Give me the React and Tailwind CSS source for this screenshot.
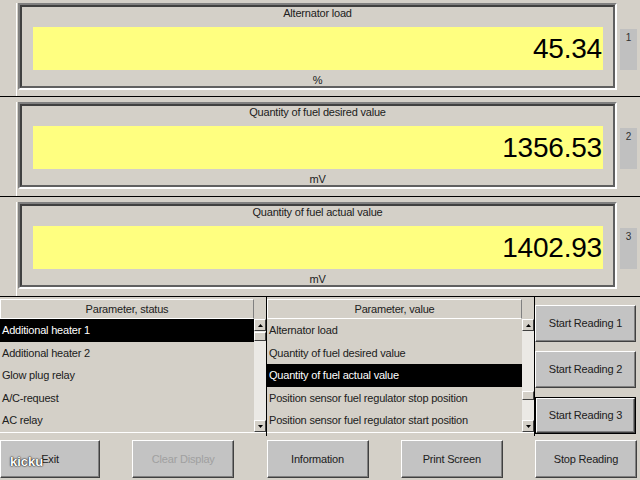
import React from "react";

const panels = [
  { title: "Alternator load", value: "45.34", unit: "%", tab: "1" },
  { title: "Quantity of fuel desired value", value: "1356.53", unit: "mV", tab: "2" },
  { title: "Quantity of fuel actual value", value: "1402.93", unit: "mV", tab: "3" },
];

const statusRows = [
  "Additional heater 1",
  "Additional heater 2",
  "Glow plug relay",
  "A/C-request",
  "AC relay",
];

const valueRows = [
  "Alternator load",
  "Quantity of fuel desired value",
  "Quantity of fuel actual value",
  "Position sensor fuel regulator stop position",
  "Position sensor fuel regulator start position",
];

function ReadingPanel({ panel, first }) {
  return (
    <div
      className={
        first
          ? "flex h-[96px] pt-[3px]"
          : "flex h-[100px] border-t border-black pt-[5px]"
      }
    >
      <div className="w-[16px]" />
      <div className="w-[2px] border-l border-white" />
      {/* sunken frame */}
      <div className="w-[599px] h-[87px] border-2 border-t-[#808080] border-l-[#808080] border-r-white border-b-white">
        <div className="h-full flex flex-col border-2 border-t-[#404040] border-l-[#404040] border-r-[#606060] border-b-[#606060]">
          <div className="h-[12px] leading-[12px] text-center text-[#202020]">
            {panel.title}
          </div>
          <div className="mt-[8px] ml-[11px] mr-[10px] h-[43px] bg-[#ffff80] text-right pr-px text-[28px] leading-[43px] text-black">
            {panel.value}
          </div>
          <div className="mt-[4px] h-[12px] leading-[12px] text-center text-[#202020]">
            {panel.unit}
          </div>
        </div>
      </div>
      <div className="ml-[3px] mt-[26px] w-[17px] h-[41px] bg-[#c0c0c0] text-center text-[10px] leading-[14px] text-[#303030] pt-[2px]">
        {panel.tab}
      </div>
    </div>
  );
}

function ScrollArrow({ up }) {
  return (
    <div className="w-[12px] h-[12px] bg-[#d4d0c8] border border-t-white border-l-white border-r-[#404040] border-b-[#404040] flex items-center justify-center">
      <svg width="5" height="3" viewBox="0 0 5 3">
        {up ? (
          <polygon points="2.5,0 5,3 0,3" fill="#000" />
        ) : (
          <polygon points="0,0 5,0 2.5,3" fill="#000" />
        )}
      </svg>
    </div>
  );
}

function ScrollBar({ thumbTop }) {
  return (
    <div className="w-[12px] h-[113px] flex flex-col bg-[#ebe9e5]">
      <ScrollArrow up />
      <div className="flex-1 relative">
        <div
          className="absolute left-0 w-[12px] h-[9px] bg-[#d4d0c8] border border-t-white border-l-white border-r-[#404040] border-b-[#404040]"
          style={{ top: thumbTop }}
        />
      </div>
      <ScrollArrow />
    </div>
  );
}

function ListBox({ header, rows, selected, thumbTop, width }) {
  return (
    <div className={width + " flex flex-col border-r border-black"}>
      <div className="flex mt-[2px]">
        <div className="flex-1 h-[20px] leading-[18px] text-center bg-[#d4d0c8] border border-white border-r-[#808080] text-[#202020]">
          {header}
        </div>
        <div className="w-[12px]" />
      </div>
      <div className="flex border-b border-white">
        <div className="flex-1 flex flex-col">
          {rows.map((row, i) => (
            <div
              key={i}
              className={
                i === selected
                  ? "h-[22.5px] leading-[22px] pl-[2px] bg-black text-white whitespace-nowrap"
                  : "h-[22.5px] leading-[22px] pl-[2px] text-[#202020] whitespace-nowrap"
              }
            >
              {row}
            </div>
          ))}
        </div>
        <ScrollBar thumbTop={thumbTop} />
      </div>
    </div>
  );
}

function WinButton({ label, className, disabled, focused }) {
  return (
    <div className={(focused ? "border border-black " : "") + className}>
      <div className="w-full h-full flex items-center justify-center bg-[#c3c3c3] border border-t-white border-l-white border-r-[#404040] border-b-[#404040] shadow-[inset_-1px_-1px_0_#808080]">
        <span className={disabled ? "text-[#a0a0a0]" : "text-[#202020]"}>
          {label}
        </span>
      </div>
    </div>
  );
}

export default function App() {
  return (
    <div className="relative w-[640px] h-[480px] overflow-hidden bg-[#d4d0c8] font-['Liberation_Sans',Arial,sans-serif] text-[11px] tracking-[-0.2px]">
      {panels.map((panel, i) => (
        <ReadingPanel key={i} panel={panel} first={i === 0} />
      ))}

      {/* lists and start buttons */}
      <div className="flex h-[140px] border-t border-black">
        <ListBox
          header="Parameter, status"
          rows={statusRows}
          selected={0}
          thumbTop={1}
          width="w-[267px]"
        />
        <ListBox
          header="Parameter, value"
          rows={valueRows}
          selected={2}
          thumbTop={60}
          width="w-[268px]"
        />
        <div className="flex-1 flex flex-col gap-[9px] pt-[8px]">
          <WinButton label="Start Reading 1" className="w-[101px] h-[37px]" />
          <WinButton label="Start Reading 2" className="w-[101px] h-[37px]" />
          <WinButton label="Start Reading 3" className="w-[101px] h-[37px]" focused />
        </div>
      </div>

      {/* bottom buttons */}
      <div className="flex justify-between w-[637px] pt-[4px]">
        <WinButton label="Exit" className="w-[100px] h-[38px]" />
        <WinButton label="Clear Display" className="w-[102px] h-[38px]" disabled />
        <WinButton label="Information" className="w-[102px] h-[38px]" />
        <WinButton label="Print Screen" className="w-[102px] h-[38px]" />
        <WinButton label="Stop Reading" className="w-[102px] h-[38px]" />
      </div>

      <div className="absolute left-[10px] top-[452px] text-[13px] font-bold text-white tracking-normal [text-shadow:0_0_2px_#000,0_0_1px_#000]">
        kicku
      </div>
    </div>
  );
}
